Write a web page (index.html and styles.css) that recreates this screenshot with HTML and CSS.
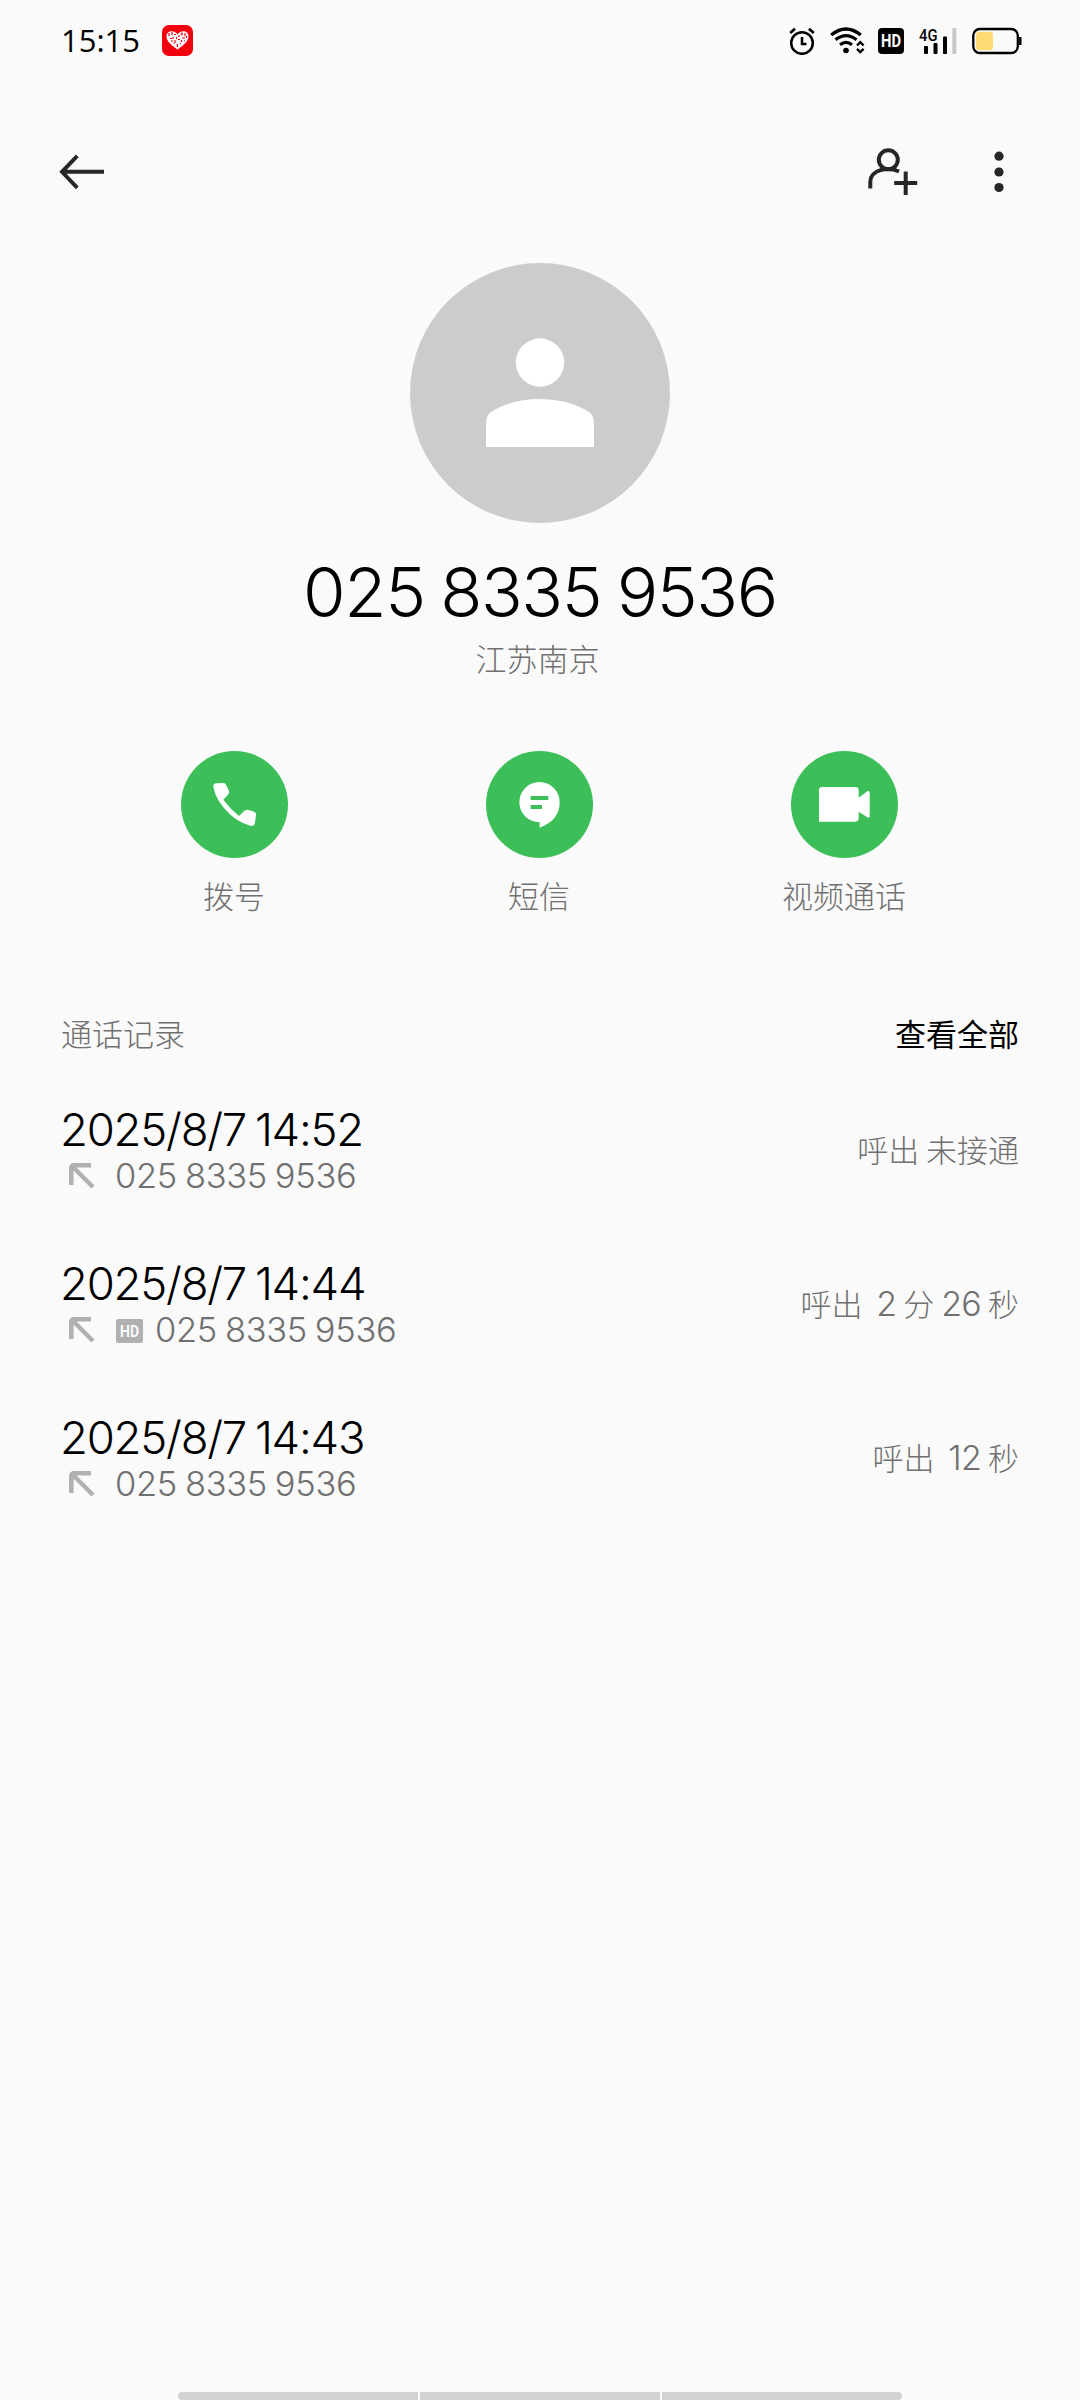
FILE: index.html
```html
<!DOCTYPE html>
<html lang="zh-CN">

<head>
  <meta charset="UTF-8">
  <meta name="viewport" content="width=device-width, initial-scale=1.0">
  <title>通话详情</title>
  <link rel="stylesheet" href="styles.css">
</head>

<body>
  <div class="status-bar">
    <span class="time">15:15</span>
    <svg class="app-icon" width="31" height="31" viewBox="0 0 31 31">
      <rect width="31" height="31" rx="7" fill="#f2000d"/>
      <path d="M15.5 24.500C9 20 4.500 16 4.500 11.500C4.500 5.500 12 4.500 15.500 9.500C19 4.500 26.500 5.500 26.500 11.500C26.500 16 22 20 15.500 24.500Z" fill="#fff"/>
      <path d="M7 8v3M8 13.500h2M10 7v3M11 12v2M12 9.500h2M9 16h2M13 15v3M14.500 12v2M17 10v2M16 14.500h2M20 7.500v3M18.500 9h1M23 8v3M20 13h3M19.500 15v2M22 16h1M24.500 11v2M11.500 18.500h1M15.500 19v3M18 18.500h1" stroke="#f2000d" stroke-width="1.200"/>
    </svg>
    <div class="status-icons">
      <svg width="26" height="28" viewBox="0 0 26 28" fill="none" stroke="#000" stroke-width="2.500">
        <circle cx="13" cy="16" r="10.800"/>
        <path d="M13 10v7h4.500"/>
        <path d="M1.200 6L6 1.800M24.800 6L20 1.800" stroke-width="2.800"/>
      </svg>
      <svg width="35" height="28" viewBox="0 0 35 28" fill="none" stroke="#000" stroke-width="3.200">
        <path d="M1.200 8Q16 -4 30.800 8"/>
        <path d="M5.500 12.800Q16 4.500 26.500 12.800"/>
        <path d="M10 17.800Q16 13 22 17.800"/>
        <circle cx="16" cy="23.500" r="2.800" fill="#000" stroke="none"/>
        <path d="M27 18.500l3.300-3.300 3.300 3.300M27 21.800l3.300 3.300 3.300-3.300" stroke-width="2.400"/>
      </svg>
      <svg class="hd-badge" width="26" height="26" viewBox="0 0 26 26">
        <rect width="26" height="26" rx="4" fill="#000"/>
        <text x="3" y="19" font-size="17.500" textLength="20" lengthAdjust="spacingAndGlyphs">HD</text>
      </svg>
      <svg class="signal" width="38" height="40" viewBox="0 -6 38 40">
        <text x="0" y="13.500" font-size="17" textLength="18.500" lengthAdjust="spacingAndGlyphs">4G</text>
        <rect x="5" y="19" width="4" height="8" rx="1" fill="#000"/>
        <rect x="14.500" y="16" width="4" height="11" rx="1" fill="#000"/>
        <rect x="24" y="9.500" width="4" height="17.500" rx="1" fill="#000"/>
        <rect x="33.300" y="1" width="4" height="26" rx="1" fill="#c8c8c8"/>
      </svg>
      <svg class="battery" width="50" height="28" viewBox="0 0 50 28">
        <rect x="1.300" y="2" width="44.500" height="24" rx="6.500" fill="none" stroke="#000" stroke-width="2.300"/>
        <rect x="4" y="4.800" width="17" height="18.500" rx="3" fill="#ffdc73"/>
        <path d="M48.300 10v8" stroke="#000" stroke-width="2.400"/>
      </svg>
    </div>
  </div>

  <div class="header">
    <svg width="46" height="36" viewBox="0 0 46 36" fill="none" stroke="#262626" stroke-width="3.900">
      <path d="M18.300 1.800L3 17.800l15.300 16M3 17.800h42"/>
    </svg>
    <div class="header-actions">
      <svg width="50" height="48" viewBox="0 0 50 48" fill="none" stroke="#262626" stroke-width="4">
        <circle cx="20.300" cy="11.800" r="9.500"/>
        <path d="M2.300 40.500V34C2.300 21.500 20 18.500 31 23.500M37.700 23.500v23.500M26.200 35h23"/>
      </svg>
      <svg class="more" width="10" height="42" viewBox="0 0 10 42" fill="#262626">
        <circle cx="5" cy="5.200" r="4.600"/>
        <circle cx="5" cy="21" r="4.600"/>
        <circle cx="5" cy="36.500" r="4.600"/>
      </svg>
    </div>
  </div>

  <div class="profile">
    <svg width="260" height="260" viewBox="0 0 260 260">
      <circle cx="130" cy="130" r="130" fill="#ccc"/>
      <circle cx="130" cy="99.500" r="24.200" fill="#fff"/>
      <path d="M76 184V160Q76 151.500 84 147Q104 136 130 136T176 147Q184 151.500 184 160V184Z" fill="#fff"/>
    </svg>
    <div class="number">025 8335 9536</div>
    <div class="place">江苏南京</div>
  </div>

  <div class="actions">
    <div class="action">
      <svg width="107" height="107" viewBox="0 0 321 321">
        <circle cx="160.500" cy="160.500" r="160.500" fill="#3cbf58"/>
        <path d="M97 107Q96 98 106 97L128 96Q133 97 135 101L143 117Q146 124 141 131L127 146Q148 174 174 195L187 182Q194 175 203 177L219 182Q226 185 225 191L222 217Q220 226 211 225Q180 218 149 192Q104 150 97 107Z" fill="#fff"/>
      </svg>
      <span>拨号</span>
    </div>
    <div class="action">
      <svg width="107" height="107" viewBox="0 0 321 321">
        <circle cx="160.500" cy="160.500" r="160.500" fill="#3cbf58"/>
        <path d="M161 230V214A60.500 60.500 0 1 1 221 154Q221 208 161 230Z" fill="#fff"/>
        <path d="M134 135h53v12h-53zM134 162h34v12h-34z" fill="#3cbf58"/>
      </svg>
      <span>短信</span>
    </div>
    <div class="action">
      <svg width="107" height="107" viewBox="0 0 321 321">
        <circle cx="160.500" cy="160.500" r="160.500" fill="#3cbf58"/>
        <path d="M84 212V118Q84 108 94 108H193Q203 108 203 118V140L229 121Q236 118 236 124V196Q236 202 229 199L203 182V202Q203 212 193 212Z" fill="#fff"/>
      </svg>
      <span>视频通话</span>
    </div>
  </div>

  <div class="log-title">
    <span>通话记录</span>
    <span class="all">查看全部</span>
  </div>

  <div class="log-item">
    <div>
      <div class="date">2025/8/7 14:52</div>
      <div class="detail">
        <svg class="out" width="26" height="26" viewBox="0 0 26 26" fill="none" stroke="#b0b0b0" stroke-width="4.500">
          <path d="M2.300 22V5Q2.300 2.300 5 2.300H22M3.500 3.500L24 24"/>
        </svg>
        <span>025 8335 9536</span>
      </div>
    </div>
    <div class="result">呼出 未接通</div>
  </div>

  <div class="log-item">
    <div>
      <div class="date">2025/8/7 14:44</div>
      <div class="detail">
        <svg class="out" width="26" height="26" viewBox="0 0 26 26" fill="none" stroke="#b0b0b0" stroke-width="4.500">
          <path d="M2.300 22V5Q2.300 2.300 5 2.300H22M3.500 3.500L24 24"/>
        </svg>
        <svg class="hd-tag" width="27" height="24" viewBox="0 0 27 24">
          <rect width="27" height="24" rx="2" fill="#b0b0b0"/>
          <text x="4" y="18" font-size="17" textLength="19" lengthAdjust="spacingAndGlyphs">HD</text>
        </svg>
        <span>025 8335 9536</span>
      </div>
    </div>
    <div class="result">呼出&nbsp; <b>2</b> 分 <b>26</b> 秒</div>
  </div>

  <div class="log-item">
    <div>
      <div class="date">2025/8/7 14:43</div>
      <div class="detail">
        <svg class="out" width="26" height="26" viewBox="0 0 26 26" fill="none" stroke="#b0b0b0" stroke-width="4.500">
          <path d="M2.300 22V5Q2.300 2.300 5 2.300H22M3.500 3.500L24 24"/>
        </svg>
        <span>025 8335 9536</span>
      </div>
    </div>
    <div class="result">呼出&nbsp; <b>12</b> 秒</div>
  </div>

  <div class="nav-hint">
    <i></i><i></i><i></i>
  </div>
</body>

</html>
```
FILE: styles.css
```css
* {
  box-sizing: border-box;
}

body {
  margin: 0;
  height: 2400px;
  display: flex;
  flex-direction: column;
  background-color: #fafafa;
  color: #000;
  font-family: "Open Sans", "Noto Sans CJK SC", sans-serif;
  font-weight: 300;
}

svg {
  display: block;
  flex-shrink: 0;
}

svg text {
  font-family: Roboto, sans-serif;
  font-weight: 700;
}

/* 状态栏 */
.status-bar {
  height: 80px;
  padding: 1px 58px 0 61px;
  display: flex;
  align-items: center;
}

.time {
  width: 101px;
  padding-bottom: 1px;
  font-size: 31px;
  font-weight: 400;
  white-space: nowrap;
}

.status-icons {
  margin-left: auto;
  display: flex;
  align-items: center;
}

.status-icons > * {
  margin-left: 15px;
}

.status-icons .hd-badge {
  margin-left: 13px;
}

.hd-badge text {
  fill: #fff;
}

.signal text {
  font-weight: 500;
}

/* 顶部操作 */
.header {
  height: 183px;
  padding: 0 76px 0 59px;
  display: flex;
  align-items: center;
  justify-content: space-between;
}

.header-actions {
  display: flex;
  align-items: center;
  gap: 76px;
}

.profile {
  display: flex;
  flex-direction: column;
  align-items: center;
}

.number,
.date,
.detail,
.result b {
  font-family: Inter, sans-serif;
}

.number {
  margin-top: 24px;
  font-size: 69px;
  line-height: 90px;
  letter-spacing: -0.02em;
  word-spacing: -0.04em;
}

.place {
  padding-right: 5px;
  font-size: 31px;
  line-height: 44px;
  color: #707070;
}

/* 拨号、短信、视频 */
.actions {
  display: grid;
  grid-template-columns: repeat(3, 305px);
  justify-content: center;
  padding: 70px 2px 0 0;
}

.action {
  display: flex;
  flex-direction: column;
  align-items: center;
  gap: 15px;
  font-size: 31px;
  line-height: 46px;
  color: #707070;
}

.log-title {
  display: flex;
  justify-content: space-between;
  padding: 92px 61px 16px;
  font-size: 31px;
  line-height: 46px;
  color: #707070;
}

.log-title .all {
  color: #000;
  font-weight: 400;
}

.log-item {
  height: 154px;
  padding: 0 61px 0 60px;
  display: flex;
  align-items: center;
  justify-content: space-between;
}

.date {
  padding-top: 2px;
  font-size: 45.5px;
  line-height: 50px;
  letter-spacing: -0.027em;
  word-spacing: -0.06em;
}

.detail {
  display: flex;
  align-items: center;
  font-size: 34.5px;
  line-height: 42px;
  letter-spacing: -0.01em;
  word-spacing: -0.04em;
  color: #707070;
}

.out {
  margin: 0 20px 0 9px;
}

.hd-tag {
  margin: 2px 12px 0 1px;
}

.hd-tag text {
  fill: #fafafa;
  letter-spacing: 0;
}

.result {
  font-size: 31px;
  line-height: 46px;
  word-spacing: -1.2px;
  color: #707070;
}

.result b {
  font-size: 34px;
  line-height: 1;
  font-weight: 300;
  letter-spacing: -0.02em;
}

.nav-hint {
  width: 724px;
  height: 8px;
  margin: auto auto 0;
  display: flex;
  gap: 2px;
}

.nav-hint i {
  flex: 1;
  background-color: #d3d3d3;
}

.nav-hint i:first-child {
  border-radius: 4px 0 0 4px;
}

.nav-hint i:last-child {
  border-radius: 0 4px 4px 0;
}
```
